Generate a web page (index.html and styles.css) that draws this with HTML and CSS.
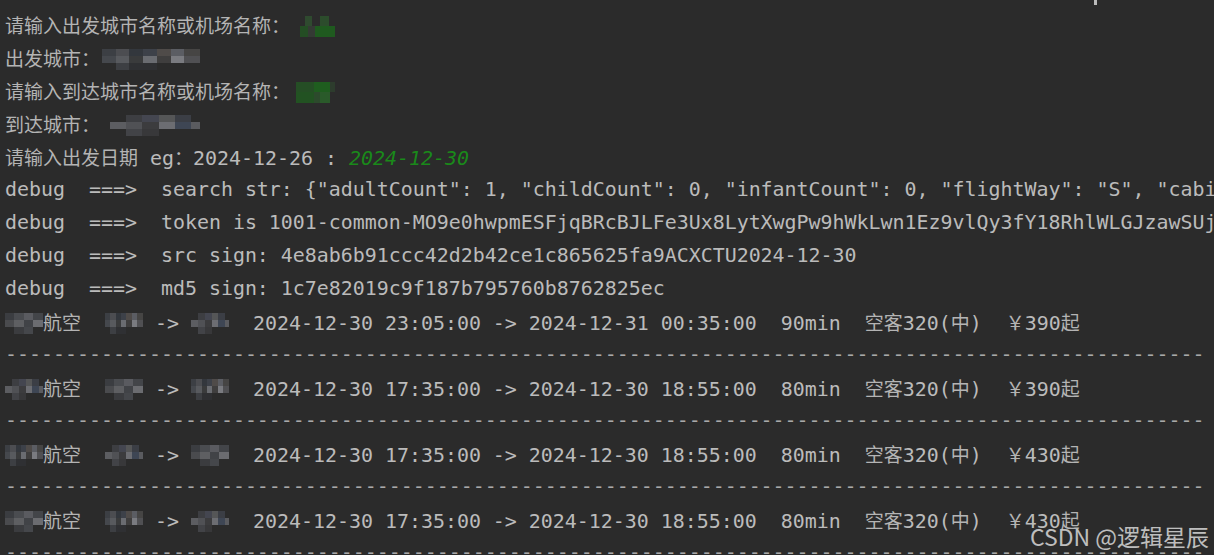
FILE: index.html
```html
<!DOCTYPE html>
<html lang="zh-CN">
<head>
<meta charset="utf-8">
<title>Console</title>
<link rel="stylesheet" href="styles.css">
</head>
<body>
<div class="console">
  <div class="line"><span class="zh">请输入出发城市名称或机场名称：</span><span class="mz g w38 ml7"><span class="r"></span><span class="r"></span></span></div>
  <div class="line"><span class="zh">出发城市：</span><span class="mz p1 w98 ml2"><span class="r"></span><span class="r"></span><span class="r"></span></span></div>
  <div class="line"><span class="zh">请输入到达城市名称或机场名称：</span><span class="mz g2 w42 ml3"><span class="r"></span><span class="r"></span></span></div>
  <div class="line"><span class="zh">到达城市：</span><span class="mz p2 w90 ml10"><span class="r"></span><span class="r"></span><span class="r"></span></span></div>
  <div class="line"><span class="zh">请输入出发日期</span> eg<span class="zh">：</span>2024-12-26 : <span class="input">2024-12-30</span></div>
  <div class="line">debug  ===>  search str: {"adultCount": 1, "childCount": 0, "infantCount": 0, "flightWay": "S", "cabinClass": "Y"}</div>
  <div class="line">debug  ===>  token is 1001-common-MO9e0hwpmESFjqBRcBJLFe3Ux8LytXwgPw9hWkLwn1Ez9vlQy3fY18RhlWLGJzawSUjRk</div>
  <div class="line">debug  ===>  src sign: 4e8ab6b91ccc42d2b42ce1c865625fa9ACXCTU2024-12-30</div>
  <div class="line">debug  ===>  md5 sign: 1c7e82019c9f187b795760b8762825ec</div>

  <div class="line"><span class="mz p3 w38"><span class="r"></span><span class="r"></span><span class="r"></span></span><span class="zh">航空</span>  <span class="mz p1 w38"><span class="r"></span><span class="r"></span><span class="r"></span></span> -> <span class="mz p2 w38"><span class="r"></span><span class="r"></span><span class="r"></span></span>  2024-12-30 23:05:00 -> 2024-12-31 00:35:00  90min  <span class="zh">空客</span>320(<span class="zh">中</span>)  <span class="zh">￥</span>390<span class="zh">起</span></div>
  <div class="line dash">----------------------------------------------------------------------------------------------------</div>
  <div class="line"><span class="mz p2 w38"><span class="r"></span><span class="r"></span><span class="r"></span></span><span class="zh">航空</span>  <span class="mz p3 w38"><span class="r"></span><span class="r"></span><span class="r"></span></span> -> <span class="mz p1 w38"><span class="r"></span><span class="r"></span><span class="r"></span></span>  2024-12-30 17:35:00 -> 2024-12-30 18:55:00  80min  <span class="zh">空客</span>320(<span class="zh">中</span>)  <span class="zh">￥</span>390<span class="zh">起</span></div>
  <div class="line dash">----------------------------------------------------------------------------------------------------</div>
  <div class="line"><span class="mz p1 w38"><span class="r"></span><span class="r"></span><span class="r"></span></span><span class="zh">航空</span>  <span class="mz p2 w38"><span class="r"></span><span class="r"></span><span class="r"></span></span> -> <span class="mz p3 w38"><span class="r"></span><span class="r"></span><span class="r"></span></span>  2024-12-30 17:35:00 -> 2024-12-30 18:55:00  80min  <span class="zh">空客</span>320(<span class="zh">中</span>)  <span class="zh">￥</span>430<span class="zh">起</span></div>
  <div class="line dash">----------------------------------------------------------------------------------------------------</div>
  <div class="line"><span class="mz p3 w38"><span class="r"></span><span class="r"></span><span class="r"></span></span><span class="zh">航空</span>  <span class="mz p1 w38"><span class="r"></span><span class="r"></span><span class="r"></span></span> -> <span class="mz p2 w38"><span class="r"></span><span class="r"></span><span class="r"></span></span>  2024-12-30 17:35:00 -> 2024-12-30 18:55:00  80min  <span class="zh">空客</span>320(<span class="zh">中</span>)  <span class="zh">￥</span>430<span class="zh">起</span></div>
  <div class="line dash">----------------------------------------------------------------------------------------------------</div>
</div>
<span class="caret"></span>
<div class="watermark">CSDN @逻辑星辰</div>
</body>
</html>
```

FILE: styles.css
```css
html, body {
  margin: 0;
  padding: 0;
  background: #2b2b2b;
  width: 1214px;
  height: 555px;
  overflow: hidden;
}

body {
  position: relative;
}

.console {
  padding: 8px 0 0 5px;
  font-family: "DejaVu Sans Mono", "Noto Sans CJK SC", monospace;
  font-size: 19.93px;
  color: #bbbbbb;
}

.line {
  height: 33px;
  line-height: 33px;
  white-space: pre;
  overflow: hidden;
}

.zh {
  font-family: "Noto Sans CJK SC", sans-serif;
  font-size: 19px;
  color: #b4b4b4;
}

.input {
  color: #1a891a;
  font-style: italic;
}

.dash {
  color: #a9a9a9;
}

/* pixelated (mosaic) redactions */
.mz {
  display: inline-flex;
  flex-direction: column;
  vertical-align: middle;
  height: 21px;
  margin-top: -3px;
}
.mz .r {
  flex: 1;
}
.w38 { width: 38px; }
.w42 { width: 42px; }
.w90 { width: 90px; }
.w98 { width: 98px; }
.ml2 { margin-left: 2px; }
.ml3 { margin-left: 3px; }
.ml7 { margin-left: 7px; }
.ml10 { margin-left: 10px; }

.g .r:nth-child(1) {
  background: linear-gradient(90deg, #2b2b2b 0 20%, #2f4a2f 20% 40%, #2b2b2b 40% 60%, #2c4c2c 60% 85%, #2b2b2b 85%);
}
.g .r:nth-child(2) {
  background: linear-gradient(90deg, #2b2b2b 0 8%, #244d24 8% 30%, #343a34 30% 48%, #1f5a1f 48% 100%);
}
.g2 .r:nth-child(1) {
  background: linear-gradient(90deg, #2b2b2b 0 8%, #254e25 8% 50%, #1f5d1f 50% 88%, #2d3c2d 88%);
}
.g2 .r:nth-child(2) {
  background: linear-gradient(90deg, #2b2b2b 0 8%, #225222 8% 50%, #2c4a2c 50% 65%, #2a5a2a 65% 88%, #2b2b2b 88%);
}

.p1 .r:nth-child(1) {
  background: linear-gradient(90deg, #3c3f44 0 14%, #4c4d51 14% 28%, #33373d 28% 42%, #3d4149 42% 56%, #4f4b49 56% 70%, #5b5d63 70% 84%, #464544 84%);
}
.p1 .r:nth-child(2) {
  background: linear-gradient(90deg, #45484d 0 14%, #585a5e 14% 28%, #3a3b3c 28% 42%, #6a6c71 42% 56%, #3f3e3e 56% 70%, #7a7b80 70% 84%, #505053 84%);
}
.p1 .r:nth-child(3) {
  background: linear-gradient(90deg, #2b2b2b 0 14%, #3d3f43 14% 28%, #2f3033 28% 56%, #2b2b2b 56%);
}

.p2 .r:nth-child(1) {
  background: linear-gradient(90deg, #2b2b2b 0 18%, #3d3e42 18% 36%, #444650 36% 54%, #555657 54% 72%, #3b3e45 72% 90%, #2b2b2b 90%);
}
.p2 .r:nth-child(2) {
  background: linear-gradient(90deg, #5c5d61 0 18%, #505155 18% 36%, #3c3c3e 36% 54%, #6c6d72 54% 72%, #3e4654 72% 90%, #5a5b5f 90%);
}
.p2 .r:nth-child(3) {
  background: linear-gradient(90deg, #2b2b2b 0 18%, #424347 18% 36%, #38383a 36% 54%, #2b2b2b 54%);
}

.p3 .r:nth-child(1) {
  background: linear-gradient(90deg, #3b3d41 0 25%, #4a4c50 25% 50%, #5a5b60 50% 75%, #434549 75%);
}
.p3 .r:nth-child(2) {
  background: linear-gradient(90deg, #4a4b4e 0 25%, #5e5f62 25% 50%, #414347 50% 75%, #6b6c70 75%);
}
.p3 .r:nth-child(3) {
  background: linear-gradient(90deg, #2b2b2b 0 25%, #3b3c3f 25% 50%, #45474b 50% 75%, #2b2b2b 75%);
}

.caret {
  position: absolute;
  left: 1094px;
  top: 0;
  width: 3px;
  height: 5px;
  background: #bbbbbb;
}

.watermark {
  position: absolute;
  right: 5px;
  bottom: 4px;
  font-family: "Noto Sans CJK SC", "Liberation Sans", sans-serif;
  font-size: 23px;
  line-height: 30px;
  color: rgba(225, 225, 225, 0.82);
}
```
